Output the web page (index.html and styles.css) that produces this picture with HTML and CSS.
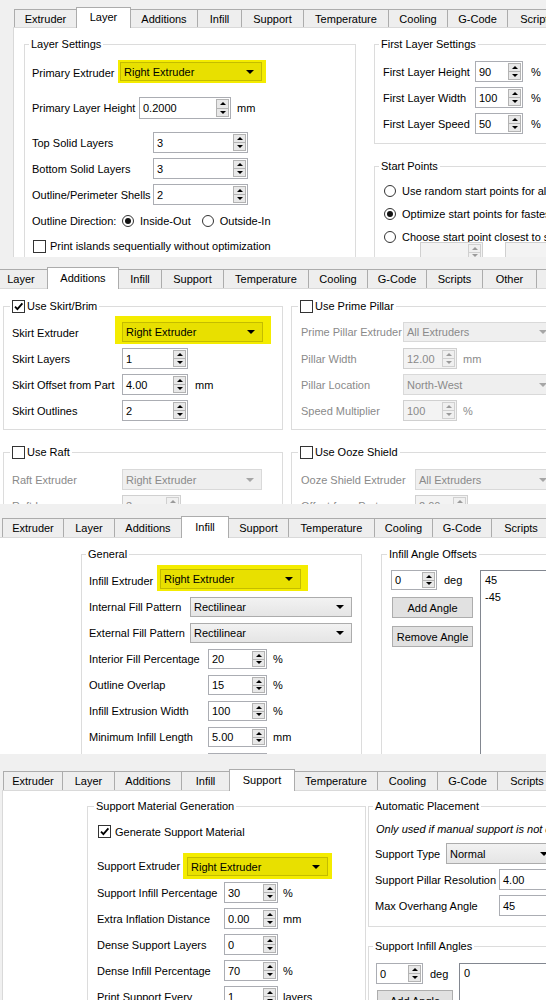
FILE: index.html
```html
<!DOCTYPE html>
<html>
<head>
<meta charset="utf-8">
<link rel="stylesheet" href="styles.css">
</head>
<body>

<section class="shot p1">
  <div class="tabs">
    <div class="tab w63">Extruder</div>
    <div class="tab on w55">Layer</div>
    <div class="tab w68">Additions</div>
    <div class="tab w45">Infill</div>
    <div class="tab w63">Support</div>
    <div class="tab w86">Temperature</div>
    <div class="tab w60">Cooling</div>
    <div class="tab w61">G-Code</div>
    <div class="tab w60">Scripts</div>
  </div>
  <div class="pane">
    <div class="col ml10">
      <div class="group mt16 w332 h260">
        <div class="gtitle">Layer Settings</div>
        <div class="gbody pl7">
          <div class="row mt9"><span class="lbl w86 lo1">Primary Extruder</span><span class="hl hlA"><span class="combo cy w142 h19">Right Extruder<i class="dd"></i></span></span></div>
          <div class="row mt14"><span class="lbl w107">Primary Layer Height</span><span class="spin w92 h22"><span class="v">0.2000</span><span class="arr"><i class="up"></i><i class="dn"></i></span></span><span class="u ml6">mm</span></div>
          <div class="row mt13"><span class="lbl w121">Top Solid Layers</span><span class="spin w95 h21"><span class="v">3</span><span class="arr"><i class="up"></i><i class="dn"></i></span></span></div>
          <div class="row mt5"><span class="lbl w121">Bottom Solid Layers</span><span class="spin w95 h21"><span class="v">3</span><span class="arr"><i class="up"></i><i class="dn"></i></span></span></div>
          <div class="row mt5"><span class="lbl w121">Outline/Perimeter Shells</span><span class="spin w95 h21"><span class="v">2</span><span class="arr"><i class="up"></i><i class="dn"></i></span></span></div>
          <div class="row mt8 h16"><span class="lbl w90">Outline Direction:</span><span class="radio on"></span><span class="rt">Inside-Out</span><span class="radio ml11"></span><span class="rt">Outside-In</span></div>
          <div class="row mt9 h16"><span class="cb ml1"></span><span class="ct">Print islands sequentially without optimization</span></div>
        </div>
      </div>
    </div>
    <div class="col ml18 w300">
      <div class="group mt16 w300 h100">
        <div class="gtitle">First Layer Settings</div>
        <div class="gbody pl8">
          <div class="row mt10"><span class="lbl w92">First Layer Height</span><span class="spin w48 h21"><span class="v">90</span><span class="arr"><i class="up"></i><i class="dn"></i></span></span><span class="u ml8">%</span></div>
          <div class="row mt5"><span class="lbl w92">First Layer Width</span><span class="spin w48 h21"><span class="v">100</span><span class="arr"><i class="up"></i><i class="dn"></i></span></span><span class="u ml8">%</span></div>
          <div class="row mt5"><span class="lbl w92">First Layer Speed</span><span class="spin w48 h21"><span class="v">50</span><span class="arr"><i class="up"></i><i class="dn"></i></span></span><span class="u ml8">%</span></div>
        </div>
      </div>
      <div class="group mt22 w300 h120">
        <div class="gtitle">Start Points</div>
        <div class="gbody pl9">
          <div class="row mt10 h16"><span class="radio"></span><span class="rt">Use random start points for all perimeters</span></div>
          <div class="row mt7 h16"><span class="radio on"></span><span class="rt">Optimize start points for fastest printing speed</span></div>
          <div class="row mt7 h16"><span class="radio"></span><span class="rt">Choose start point closest to specific location</span></div>
          <div class="row mtm3 ml36"><span class="spin dis w63 h20"><span class="v"></span><span class="arr"><i class="up"></i><i class="dn"></i></span></span><span class="spin dis w63 h20 ml22"><span class="v"></span></span></div>
        </div>
      </div>
    </div>
  </div>
</section>

<section class="shot p2">
  <div class="tabs">
    <div class="tab w54">Layer</div>
    <div class="tab on w72">Additions</div>
    <div class="tab w44">Infill</div>
    <div class="tab w63">Support</div>
    <div class="tab w86">Temperature</div>
    <div class="tab w60">Cooling</div>
    <div class="tab w60">G-Code</div>
    <div class="tab w57">Scripts</div>
    <div class="tab w55">Other</div>
    <div class="tab w30"></div>
  </div>
  <div class="pane">
    <div class="col ml3 w280">
      <div class="group mt17 w280">
        <div class="gtitle t6"><span class="cb"><svg viewBox="0 0 11 11"><path d="M2 5.6 L4.4 8.2 L9.4 2.4" fill="none" stroke="#000" stroke-width="1.8"/></svg></span>Use Skirt/Brim</div>
        <div class="gbody pl8 pb8">
          <div class="row mt3"><span class="lbl w103 lo4">Skirt Extruder</span><span class="hl hlB"><span class="combo cy w141 h20">Right Extruder<i class="dd"></i></span></span></div>
          <div class="row mt4"><span class="lbl w110">Skirt Layers</span><span class="spin w66 h21"><span class="v">1</span><span class="arr"><i class="up"></i><i class="dn"></i></span></span></div>
          <div class="row mt5"><span class="lbl w110">Skirt Offset from Part</span><span class="spin w66 h21"><span class="v">4.00</span><span class="arr"><i class="up"></i><i class="dn"></i></span></span><span class="u ml7">mm</span></div>
          <div class="row mt5"><span class="lbl w110">Skirt Outlines</span><span class="spin w66 h21"><span class="v">2</span><span class="arr"><i class="up"></i><i class="dn"></i></span></span></div>
        </div>
      </div>
      <div class="group mt22 w280 h100">
        <div class="gtitle t6"><span class="cb"></span>Use Raft</div>
        <div class="gbody pl8">
          <div class="row mt10"><span class="lbl dis w110">Raft Extruder</span><span class="combo dis w140 h21">Right Extruder<i class="dd"></i></span></div>
          <div class="row mt5"><span class="lbl dis w110">Raft Layers</span><span class="spin dis w59 h21"><span class="v">3</span><span class="arr"><i class="up"></i><i class="dn"></i></span></span></div>
        </div>
      </div>
    </div>
    <div class="col ml8 w300">
      <div class="group mt17 w300">
        <div class="gtitle t6"><span class="cb"></span>Use Prime Pillar</div>
        <div class="gbody pl9 pb8">
          <div class="row mt9"><span class="lbl dis w102">Prime Pillar Extruder</span><span class="combo dis w152 h20">All Extruders<i class="dd"></i></span></div>
          <div class="row mt6"><span class="lbl dis w102">Pillar Width</span><span class="spin dis w54 h21"><span class="v">12.00</span><span class="arr"><i class="up"></i><i class="dn"></i></span></span><span class="u dis ml6">mm</span></div>
          <div class="row mt5"><span class="lbl dis w102">Pillar Location</span><span class="combo dis w152 h21">North-West<i class="dd"></i></span></div>
          <div class="row mt5"><span class="lbl dis w102">Speed Multiplier</span><span class="spin dis w54 h21"><span class="v">100</span><span class="arr"><i class="up"></i><i class="dn"></i></span></span><span class="u dis ml6">%</span></div>
        </div>
      </div>
      <div class="group mt22 w300 h100">
        <div class="gtitle t6"><span class="cb"></span>Use Ooze Shield</div>
        <div class="gbody pl9">
          <div class="row mt10"><span class="lbl dis w114">Ooze Shield Extruder</span><span class="combo dis w140 h21">All Extruders<i class="dd"></i></span></div>
          <div class="row mt5"><span class="lbl dis w114">Offset from Part</span><span class="spin dis w53 h21"><span class="v">2.00</span><span class="arr"><i class="up"></i><i class="dn"></i></span></span><span class="u dis ml6">mm</span></div>
        </div>
      </div>
    </div>
  </div>
</section>

<section class="shot p3">
  <div class="tabs">
    <div class="tab w62">Extruder</div>
    <div class="tab w52">Layer</div>
    <div class="tab w68">Additions</div>
    <div class="tab on w48">Infill</div>
    <div class="tab w61">Support</div>
    <div class="tab w87">Temperature</div>
    <div class="tab w59">Cooling</div>
    <div class="tab w60">G-Code</div>
    <div class="tab w60">Scripts</div>
  </div>
  <div class="pane">
    <div class="col ml81 w281">
      <div class="group mt16 w281 h220">
        <div class="gtitle">General</div>
        <div class="gbody pl7">
          <div class="row mt4"><span class="lbl w68 lo4">Infill Extruder</span><span class="hl hlC"><span class="combo cy w141 h20">Right Extruder<i class="dd"></i></span></span></div>
          <div class="row mt6"><span class="lbl w101">Internal Fill Pattern</span><span class="combo w162 h20">Rectilinear<i class="dd"></i></span></div>
          <div class="row mt6"><span class="lbl w101">External Fill Pattern</span><span class="combo w162 h20">Rectilinear<i class="dd"></i></span></div>
          <div class="row mt6"><span class="lbl w119">Interior Fill Percentage</span><span class="spin w59 h20"><span class="v">20</span><span class="arr"><i class="up"></i><i class="dn"></i></span></span><span class="u ml6">%</span></div>
          <div class="row mt6"><span class="lbl w119">Outline Overlap</span><span class="spin w59 h20"><span class="v">15</span><span class="arr"><i class="up"></i><i class="dn"></i></span></span><span class="u ml6">%</span></div>
          <div class="row mt6"><span class="lbl w119">Infill Extrusion Width</span><span class="spin w59 h20"><span class="v">100</span><span class="arr"><i class="up"></i><i class="dn"></i></span></span><span class="u ml6">%</span></div>
          <div class="row mt6"><span class="lbl w119">Minimum Infill Length</span><span class="spin w59 h20"><span class="v">5.00</span><span class="arr"><i class="up"></i><i class="dn"></i></span></span><span class="u ml6">mm</span></div>
          <div class="row mt6"><span class="lbl w119">Combine Infill Every</span><span class="spin w59 h20"><span class="v">1</span><span class="arr"><i class="up"></i><i class="dn"></i></span></span><span class="u ml6">layers</span></div>
        </div>
      </div>
    </div>
    <div class="col ml19 w300">
      <div class="group mt16 w300 h220">
        <div class="gtitle t5">Infill Angle Offsets</div>
        <div class="abody pl9 mt9">
          <div class="acol w89">
            <div class="row"><span class="spin w46 h20"><span class="v">0</span><span class="arr"><i class="up"></i><i class="dn"></i></span></span><span class="u ml7">deg</span></div>
            <div class="btn w81 h21 mt7 ml1">Add Angle</div>
            <div class="btn w81 h21 mt8 ml1">Remove Angle</div>
          </div>
          <div class="list w100 h200"><div>45</div><div>-45</div></div>
        </div>
      </div>
    </div>
  </div>
</section>

<section class="shot p4">
  <div class="tabs">
    <div class="tab w60">Extruder</div>
    <div class="tab w53">Layer</div>
    <div class="tab w68">Additions</div>
    <div class="tab w49">Infill</div>
    <div class="tab on w66">Support</div>
    <div class="tab w84">Temperature</div>
    <div class="tab w61">Cooling</div>
    <div class="tab w61">G-Code</div>
    <div class="tab w60">Scripts</div>
  </div>
  <div class="pane">
    <div class="col ml84 w279">
      <div class="group mt15 w279 h220">
        <div class="gtitle t6">Support Material Generation</div>
        <div class="gbody pl9">
          <div class="row mt12 h13"><span class="cb ml1"><svg viewBox="0 0 11 11"><path d="M2 5.6 L4.4 8.2 L9.4 2.4" fill="none" stroke="#000" stroke-width="1.8"/></svg></span><span class="ct">Generate Support Material</span></div>
          <div class="row mt15"><span class="lbl w86">Support Extruder</span><span class="hl hlD"><span class="combo cy w141 h19">Right Extruder<i class="dd"></i></span></span></div>
          <div class="row mt3"><span class="lbl w127">Support Infill Percentage</span><span class="spin w54 h21"><span class="v">30</span><span class="arr"><i class="up"></i><i class="dn"></i></span></span><span class="u ml5">%</span></div>
          <div class="row mt5"><span class="lbl w127">Extra Inflation Distance</span><span class="spin w54 h21"><span class="v">0.00</span><span class="arr"><i class="up"></i><i class="dn"></i></span></span><span class="u ml5">mm</span></div>
          <div class="row mt5"><span class="lbl w127">Dense Support Layers</span><span class="spin w54 h21"><span class="v">0</span><span class="arr"><i class="up"></i><i class="dn"></i></span></span></div>
          <div class="row mt5"><span class="lbl w127">Dense Infill Percentage</span><span class="spin w54 h21"><span class="v">70</span><span class="arr"><i class="up"></i><i class="dn"></i></span></span><span class="u ml5">%</span></div>
          <div class="row mt5"><span class="lbl w127">Print Support Every</span><span class="spin w54 h21"><span class="v">1</span><span class="arr"><i class="up"></i><i class="dn"></i></span></span><span class="u ml5">layers</span></div>
        </div>
      </div>
    </div>
    <div class="col ml2 w300">
      <div class="group mt15 w300">
        <div class="gtitle">Automatic Placement</div>
        <div class="gbody pl6 pb10">
          <div class="row mt9 h14"><span class="note ml1">Only used if manual support is not defined</span></div>
          <div class="row mt7"><span class="lbl w71">Support Type</span><span class="combo w110 h21">Normal<i class="dd"></i></span></div>
          <div class="row mt5"><span class="lbl w124">Support Pillar Resolution</span><span class="spin w60 h21"><span class="v">4.00</span></span></div>
          <div class="row mt5"><span class="lbl w124">Max Overhang Angle</span><span class="spin w60 h21"><span class="v">45</span></span></div>
        </div>
      </div>
      <div class="group mt19 w300 h100">
        <div class="gtitle">Support Infill Angles</div>
        <div class="abody pl7 mt10">
          <div class="acol w83">
            <div class="row"><span class="spin w47 h21"><span class="v">0</span><span class="arr"><i class="up"></i><i class="dn"></i></span></span><span class="u ml7">deg</span></div>
            <div class="btn w76 h21 mt6 ml1">Add Angle</div>
          </div>
          <div class="list w100 h100"><div>0</div></div>
        </div>
      </div>
    </div>
  </div>
</section>

</body>
</html>
```

FILE: styles.css
```css
* { box-sizing: border-box; margin: 0; padding: 0; }
html, body { background: #f0f0f0; }
body {
  width: 546px;
  height: 1000px;
  overflow: hidden;
  font-family: "Liberation Sans", Arial, sans-serif;
  font-size: 11px;
  color: #000;
}

/* screenshot strips */
.shot { width: 546px; display: flex; flex-direction: column; overflow: hidden; background: #f0f0f0; }
.p1 { height: 257px; }
.p2 { height: 247px; }
.p3 { height: 250px; }
.p4 { height: 246px; }

/* tabs */
.tabs { flex: none; display: flex; align-items: flex-end; height: 21px; }
.p1 .tabs { height: 20px; margin-top: 7px; padding-left: 14px; }
.p2 .tabs { margin-top: 10px; margin-left: -6px; }
.p3 .tabs { margin-top: 12px; padding-left: 2px; }
.p4 .tabs { margin-top: 15px; padding-left: 3px; }

.tab {
  flex: none;
  height: 19px;
  margin-right: -1px;
  border: 1px solid #acacac;
  border-bottom: 0;
  background: #eeeeee;
  display: flex;
  align-items: center;
  justify-content: center;
  white-space: nowrap;
}
.p1 .tab { height: 18px; }
.tab.on { height: 22px; margin-bottom: -1px; background: #fff; position: relative; z-index: 1; padding-bottom: 2px; }
.p1 .tab.on { height: 21px; }

.pane {
  flex: 1;
  min-height: 0;
  background: #fff;
  border-top: 1px solid #d9d9d9;
  display: flex;
  align-items: flex-start;
}
.p1 .pane { margin-left: 13px; border-left: 1px solid #d9d9d9; }
.p4 .pane { margin-left: 2px; border-left: 1px solid #d9d9d9; }

.col { flex: none; display: flex; flex-direction: column; }

/* group boxes */
.group { flex: none; border: 1px solid #dcdcdc; }
.gtitle {
  display: flex;
  align-items: center;
  gap: 2px;
  width: max-content;
  height: 14px;
  line-height: 14px;
  margin: -8px 0 0 4px;
  padding: 0 2px;
  background: #fff;
  white-space: nowrap;
}
.gtitle.t5 { margin-left: 5px; }
.gtitle.t6 { margin-left: 6px; }

.row { display: flex; align-items: center; white-space: nowrap; }
.lbl { flex: none; }
.lbl.lo1 { padding-top: 2px; }
.lbl.lo4 { padding-top: 5px; }
.lbl.dis, .u.dis { color: #8a8a8a; }
.u { flex: none; }
.rt { margin-left: 6px; }
.ct { margin-left: 4px; }
.note { font-style: italic; }

/* spin boxes */
.spin { flex: none; display: flex; border: 1px solid #abadb3; background: #fff; }
.spin .v { flex: 1; display: flex; align-items: center; padding-left: 3px; overflow: hidden; }
.arr { flex: none; width: 14px; display: flex; flex-direction: column; padding: 1px 1px 1px 0; }
.arr i {
  flex: 1;
  display: flex;
  align-items: center;
  justify-content: center;
  border: 1px solid #b3b3b3;
  background: #e8e8e8;
}
.arr i + i { margin-top: -1px; }
.up::after { content: ""; border-left: 3px solid transparent; border-right: 3px solid transparent; border-bottom: 3px solid #000; }
.dn::after { content: ""; border-left: 3px solid transparent; border-right: 3px solid transparent; border-top: 3px solid #000; }
.spin.dis { background: #f3f3f3; border-color: #d0d0d0; color: #8a8a8a; }
.spin.dis .arr i { background: #f0f0f0; border-color: #d0d0d0; }
.spin.dis .up::after { border-bottom-color: #9a9a9a; }
.spin.dis .dn::after { border-top-color: #9a9a9a; }

/* combo boxes */
.combo {
  flex: none;
  display: flex;
  align-items: center;
  padding-left: 3px;
  border: 1px solid #acacac;
  background: linear-gradient(#f2f2f2, #e5e5e5);
  overflow: hidden;
  white-space: nowrap;
}
.dd {
  flex: none;
  margin-left: auto;
  margin-right: 7px;
  border-left: 4px solid transparent;
  border-right: 4px solid transparent;
  border-top: 4px solid #000;
}
.combo.cy { background: #e8e000; border-color: #c4bc00; }
.combo.dis { background: #efefef; border-color: #d9d9d9; color: #8a8a8a; }
.combo.dis .dd { border-top-color: #a6a6a6; }

/* yellow highlight */
.hl { flex: none; display: flex; background: #f4ec00; }
.hlA { padding: 2px 4px 2px 2px; }
.hlB { padding: 6px 8px 2px 7px; }
.hlC { padding: 4px 7px 2px 3px; }
.hlD { padding: 4px 4px 3px 4px; }

/* radios / checkboxes */
.radio {
  flex: none;
  width: 12px;
  height: 12px;
  border: 1px solid #333;
  border-radius: 50%;
  background: #fff;
  display: flex;
  align-items: center;
  justify-content: center;
}
.radio.on::after { content: ""; width: 6px; height: 6px; border-radius: 50%; background: #111; }
.cb { flex: none; width: 13px; height: 13px; border: 1px solid #333; background: #fff; display: flex; }
.cb svg { width: 11px; height: 11px; }

/* buttons / list */
.abody { display: flex; align-items: flex-start; }
.acol { flex: none; display: flex; flex-direction: column; }
.btn {
  flex: none;
  display: flex;
  align-items: center;
  justify-content: center;
  border: 1px solid #adadad;
  background: #e1e1e1;
  white-space: nowrap;
}
.list { flex: none; border: 1px solid #828790; background: #fff; padding: 1px 0 0 4px; }
.list div { height: 17px; line-height: 17px; }

/* spacing utilities */
.mt3 { margin-top: 3px; } .mt4 { margin-top: 4px; } .mt5 { margin-top: 5px; } .mt6 { margin-top: 6px; }
.mt7 { margin-top: 7px; } .mt8 { margin-top: 8px; } .mt9 { margin-top: 9px; } .mt10 { margin-top: 10px; }
.mt12 { margin-top: 12px; } .mt13 { margin-top: 13px; } .mt14 { margin-top: 14px; } .mt15 { margin-top: 15px; }
.mt16 { margin-top: 16px; } .mt17 { margin-top: 17px; } .mt19 { margin-top: 19px; } .mt22 { margin-top: 22px; }
.mtm3 { margin-top: -3px; }
.ml1 { margin-left: 1px; } .ml2 { margin-left: 2px; } .ml3 { margin-left: 3px; } .ml5 { margin-left: 5px; }
.ml6 { margin-left: 6px; } .ml7 { margin-left: 7px; } .ml8 { margin-left: 8px; } .ml10 { margin-left: 10px; }
.ml11 { margin-left: 11px; } .ml18 { margin-left: 18px; } .ml19 { margin-left: 19px; } .ml22 { margin-left: 22px; }
.ml36 { margin-left: 36px; } .ml81 { margin-left: 81px; } .ml84 { margin-left: 84px; }
.pl6 { padding-left: 6px; } .pl7 { padding-left: 7px; } .pl8 { padding-left: 8px; } .pl9 { padding-left: 9px; }
.pb8 { padding-bottom: 8px; } .pb10 { padding-bottom: 10px; }

/* size utilities */
.w30 { width: 30px; } .w44 { width: 44px; } .w45 { width: 45px; } .w46 { width: 46px; } .w47 { width: 47px; }
.w48 { width: 48px; } .w49 { width: 49px; } .w52 { width: 52px; } .w53 { width: 53px; } .w54 { width: 54px; }
.w55 { width: 55px; } .w57 { width: 57px; } .w59 { width: 59px; } .w60 { width: 60px; } .w61 { width: 61px; }
.w62 { width: 62px; } .w63 { width: 63px; } .w66 { width: 66px; } .w68 { width: 68px; } .w71 { width: 71px; }
.w72 { width: 72px; } .w76 { width: 76px; } .w81 { width: 81px; } .w83 { width: 83px; } .w84 { width: 84px; }
.w86 { width: 86px; } .w87 { width: 87px; } .w89 { width: 89px; } .w90 { width: 90px; } .w92 { width: 92px; }
.w95 { width: 95px; } .w100 { width: 100px; } .w101 { width: 101px; } .w102 { width: 102px; } .w103 { width: 103px; }
.w107 { width: 107px; } .w110 { width: 110px; } .w114 { width: 114px; } .w119 { width: 119px; } .w121 { width: 121px; }
.w124 { width: 124px; } .w127 { width: 127px; } .w140 { width: 140px; } .w141 { width: 141px; } .w142 { width: 142px; }
.w152 { width: 152px; } .w162 { width: 162px; } .w279 { width: 279px; } .w280 { width: 280px; } .w281 { width: 281px; }
.w300 { width: 300px; } .w332 { width: 332px; }
.h13 { height: 13px; } .h14 { height: 14px; } .h16 { height: 16px; } .h19 { height: 19px; } .h20 { height: 20px; }
.h21 { height: 21px; } .h22 { height: 22px; } .h100 { height: 100px; } .h120 { height: 120px; } .h200 { height: 200px; }
.h220 { height: 220px; } .h260 { height: 260px; }
```
